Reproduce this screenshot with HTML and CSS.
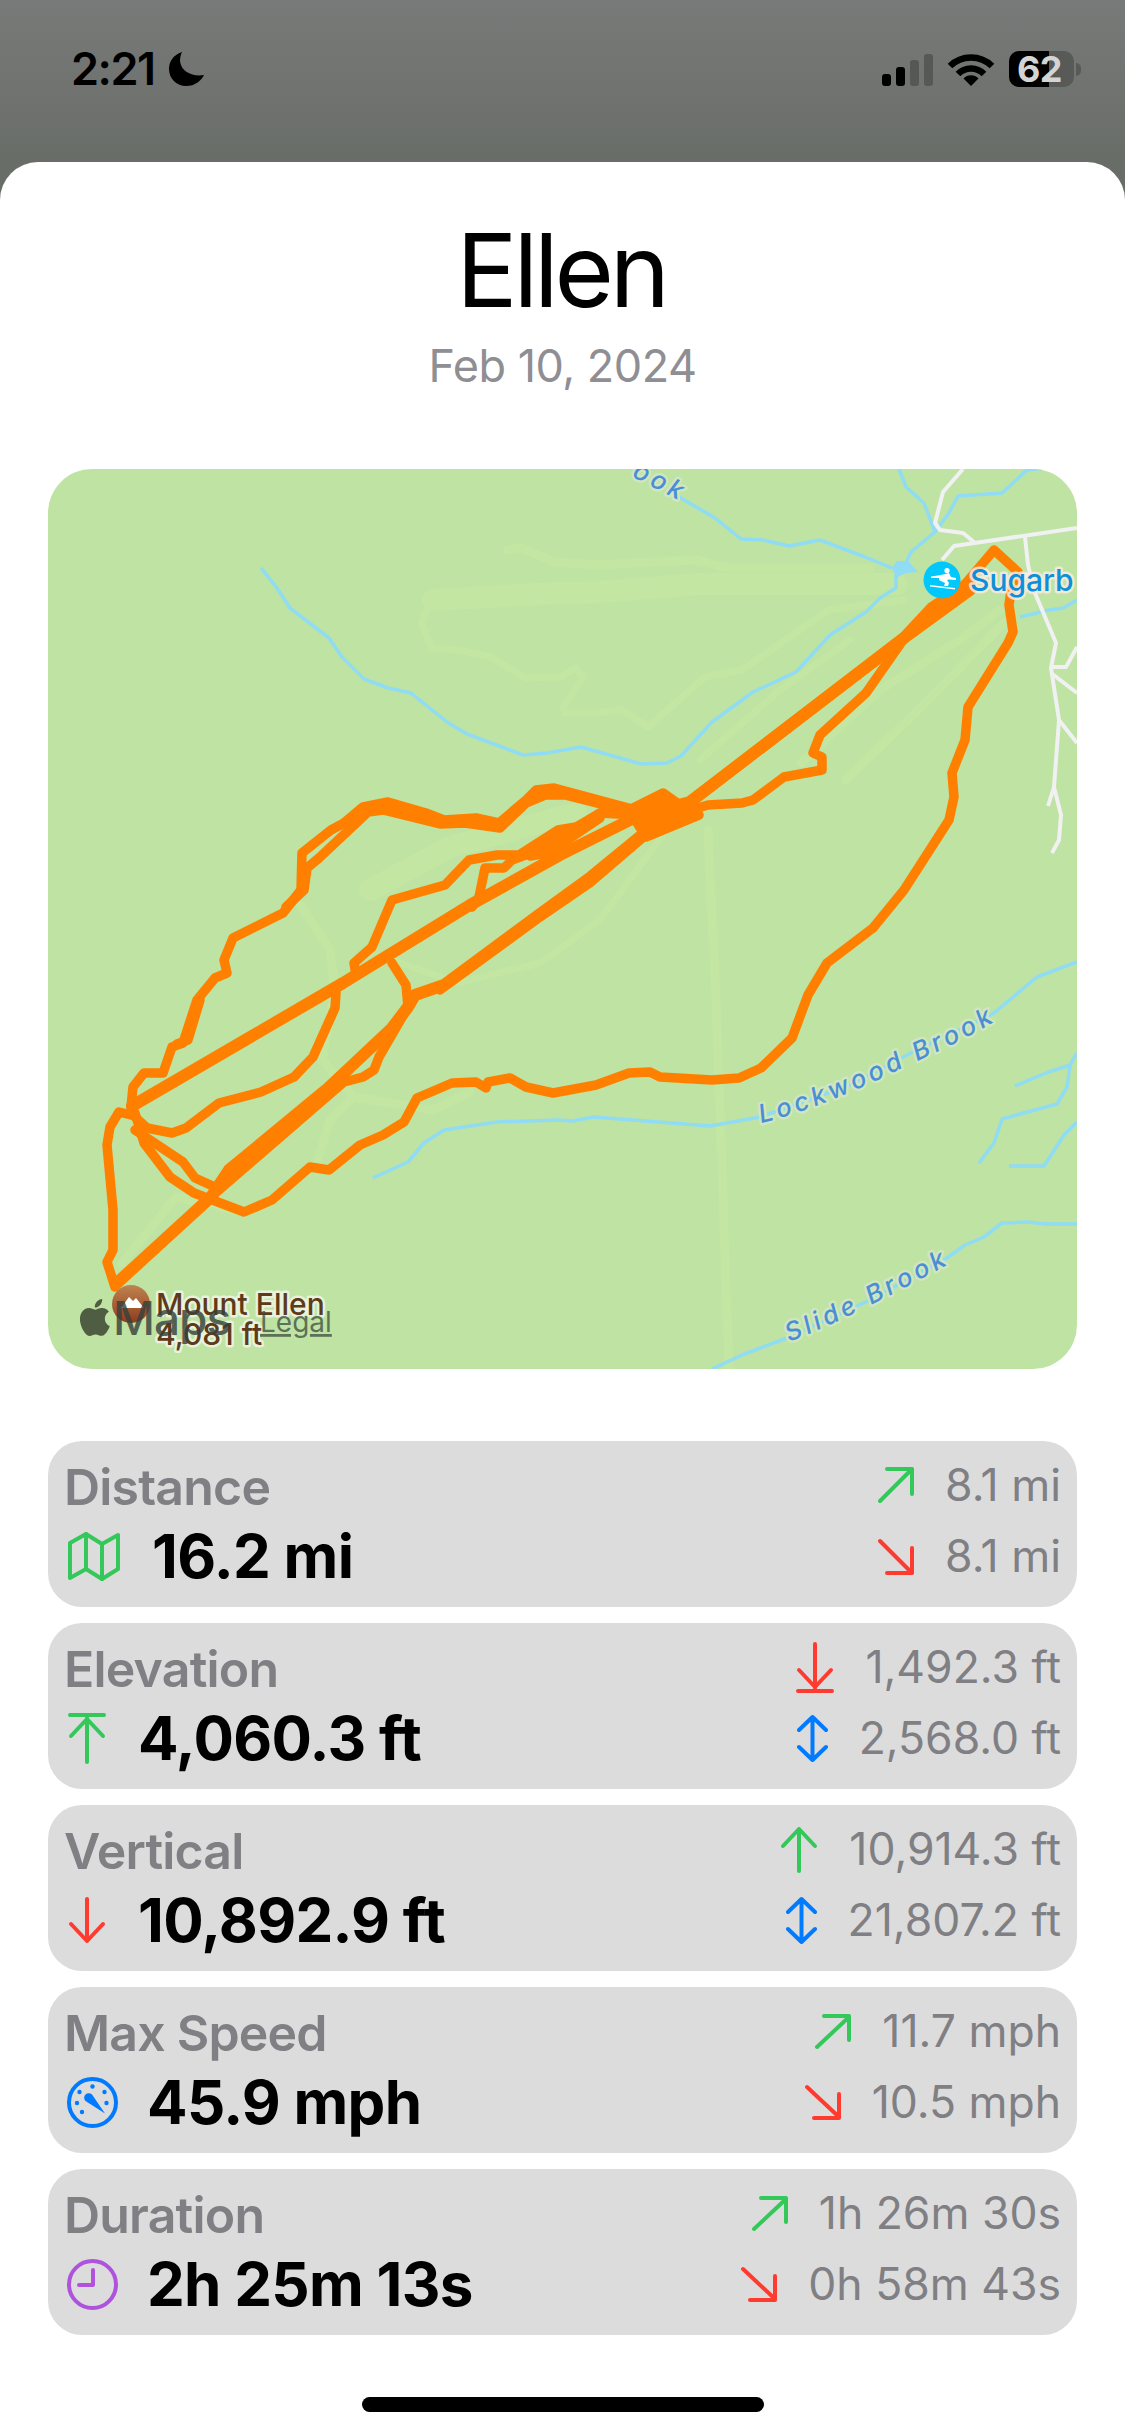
FILE: index.html
```html
<!DOCTYPE html>
<html lang="en">
<head>
<meta charset="utf-8">
<title>Ellen</title>
<link rel="stylesheet" href="styles.css">
</head>
<body>
<header class="status">
  <div class="status-left">
    <span class="clock">2:21</span>
    <svg class="moon" viewBox="0 0 35 34"><path d="M13 0C4 3 0 10 0 17c0 10 8 17 17 17 9 0 15-5 18-11-11 2-23-3-24-14 0-4 1-7 2-9z"/></svg>
  </div>
  <div class="status-right">
    <div class="signal"><i class="bar b1"></i><i class="bar b2"></i><i class="bar b3"></i><i class="bar b4"></i></div>
    <svg class="wifi" viewBox="0 0 48 32"><path class="wifi-arc" d="M3 12A30 30 0 0 1 45 12"/><path class="wifi-arc" d="M11 20A18 18 0 0 1 37 20"/><path d="M24 32 16.500 24.500A10.500 10.500 0 0 1 31.500 24.500Z"/></svg>
    <div class="battery"><div class="battery-fill"></div><span class="battery-text">62</span></div>
    <div class="battery-nub"></div>
  </div>
</header>

<main class="sheet">
  <h1 class="title">Ellen</h1>
  <p class="date">Feb 10, 2024</p>

  <div class="map">
    <svg class="map-canvas" viewBox="48 469 1029 900">
      <defs>
        <path id="lockwood" d="M761 1123 C800 1114 850 1094 890 1074 S960 1044 1010 1012"/>
        <path id="slide" d="M789 1342 C830 1326 880 1302 960 1258"/>
        <path id="topbrook" d="M560 440 L682 502"/>
        <linearGradient id="peak" x1="0" y1="0" x2="0" y2="1"><stop offset="0" stop-color="#c08350"/><stop offset="1" stop-color="#8e3c1c"/></linearGradient>
      </defs>

      <g class="piste">
        <path class="wide" d="M433 600 540 594 600 592 698 584 897 584"/>
        <path class="mid" d="M508 550 522 548 554 562 600 565 629 563 698 560 725 568 870 568"/>
        <path class="thin" d="M433 593 422 623 431 648 460 650 490 657 526 678 561 677 576 668 583 677 563 708 565 713 594 713 622 710 648 727 705 677 742 670 829 610 904 600"/>
        <path class="mid" d="M846 780 921 707 1004 623"/>
        <path class="mid" d="M801 763 880 690 960 640 1000 610"/>
        <path class="thin" d="M700 760 780 690 850 640"/>
        <path class="mid" d="M708 830 716 1000 729 1369"/>
        <path class="wide" d="M370 890 450 847 576 813"/>
        <path class="mid" d="M122 1263 176 1197 244 1212"/>
        <path class="mid" d="M300 905 330 950 335 990 322 1060 354 1097 330 1120 316 1165"/>
        <path class="mid" d="M354 1097 433 1110 470 1092"/>
        <path class="thin" d="M392 960 458 983 540 963 600 920 663 835"/>
      </g>

      <g class="stream">
        <path d="M261 568 277 588 290 608 329 638 342 657 364 679 388 688 411 693 447 722 467 734 523 755 547 753 581 747 641 764 667 763 681 756 712 722 753 692 796 672 830 635 866 612 880 598 896 588 896 575"/>
        <path d="M679 497 715 518 741 539 763 540 789 546 820 540 865 557 892 568"/>
        <path d="M905 565 911 552 935 532 949 513 958 496 1002 493 1027 470 1045 468"/>
        <path d="M899 469 906 487 924 503 935 532"/>
        <path d="M1020 617 1049 610 1063 608 1077 600"/>
        <path d="M373 1178 408 1162 424 1143 444 1130 497 1122 558 1120 572 1121 594 1117 710 1126 760 1117 850 1085 911 1053 994 1013 1037 977 1077 962"/>
        <path d="M1015 1086 1046 1073 1070 1065 1077 1053"/>
        <path d="M1070 1065 1067 1087 1057 1104 1002 1119 994 1143 979 1163"/>
        <path d="M1009 1166 1044 1166 1064 1135 1077 1122"/>
        <path d="M712 1369 742 1355 787 1338 870 1300 947 1258 965 1245 984 1237 1002 1223 1028 1222 1046 1224 1077 1224"/>
      </g>
      <path class="lake" d="M892 568 897 561 908 561 918 572 906 573 896 578Z"/>

      <g class="road">
        <path d="M963 469 943 492 935 523 940 530 963 533 974 542"/>
        <path d="M1077 528 954 546 942 560"/>
        <path d="M1025 537 1028 565 1035 593 1056 643 1051 668 1059 720 1054 787 1061 815 1059 840 1052 853"/>
        <path d="M1054 787 1048 806"/>
        <path d="M1059 720 1077 743"/>
        <path d="M1051 673 1077 693"/>
        <path d="M1051 667 1066 667 1077 647"/>
        <path d="M1028 573 1018 585"/>
      </g>

      <g class="track">
        <path class="thick" d="M132 1106 343 983 470 905 560 855 640 815 690 802 904 638 932 608 970 583"/>
        <path class="thick" d="M117 1283 211 1197 229 1170 326 1090 392 1028 408 1007 415 995 444 985 540 914 591 877 646 832 690 802 904 638 970 590"/>
        <path d="M232 1172 326 1094"/>
        <path d="M440 990 540 917 591 882 646 835"/>
        <path d="M131 1107 133 1087 144 1073 163 1073 172 1047 183 1043 197 1000 215 978 227 973 224 960 233 938 283 913 301 890 302 853 331 830 344 823 363 807 388 802 426 813 444 820 476 818 499 823 526 800 536 790 554 788 569 792 636 810"/>
        <path d="M177 1044 188 1040 200 1000"/>
        <path d="M286 907 304 890 307 868 319 858 368 812 383 810 440 824 465 823 500 828 526 803 545 795 565 795 636 813"/>
        <path d="M356 975 354 963 372 947 392 900 445 885 469 860 497 855 519 855 558 830 576 827 600 813 636 815 663 817"/>
        <path d="M472 907 479 897 485 868 504 868 512 860 547 847 600 813"/>
        <path d="M530 856 548 853 600 818"/>
        <path d="M392 963 406 985 408 1007 379 1057 374 1070 363 1077 344 1082 211 1197"/>
        <path d="M336 993 335 1008 313 1057 294 1077 261 1092 219 1103 186 1128 172 1133 147 1128 135 1117"/>
        <path d="M135 1113 144 1143 170 1177 194 1193 244 1212 272 1200 310 1167 329 1170 360 1145 383 1135 404 1122 417 1098 452 1083 476 1082 486 1088 488 1082 510 1078 526 1087 553 1093 596 1085 629 1073 650 1072 660 1077 712 1080 739 1078 761 1068 792 1038 808 995 827 963 873 928 904 890 949 820 954 797 952 773 965 740 968 707 1008 643 1013 632 1009 605 1011 590 1018 572 994 550 966 583 939 607"/>
        <path d="M135 1130 183 1162 195 1178 215 1187"/>
        <path d="M131 1115 119 1112 110 1127 107 1145 113 1210 113 1250 107 1262 115 1287"/>
        <path d="M680 813 708 805 742 803 753 800 784 777 822 770 822 757 813 753 820 735 866 693 901 643"/>
        <path class="blob" d="M629 810 663 793 680 805 699 815 646 837Z"/>
      </g>

      <text class="water"><textPath href="#lockwood">Lockwood Brook</textPath></text>
      <text class="water"><textPath href="#slide">Slide Brook</textPath></text>
      <text class="water" text-anchor="end"><textPath href="#topbrook" startOffset="100%">ook</textPath></text>

      <circle class="ski-badge" cx="942" cy="580" r="18.500"/>
      <g class="skier">
        <circle cx="947" cy="570.500" r="2.600"/>
        <path d="M941 575 949 573 951 577 956 578 956 580 949 579.500 947 580 949 583 948 586 944 586 945 583 939 580 939 578 931 578 931 576.500Z"/>
        <path d="M930 585 955 588V589.500L930 586.500Z"/>
      </g>
      <text class="poi" x="970" y="591">Sugarb</text>

      <circle class="peak-badge" cx="131" cy="1304" r="19"/>
      <path class="peak-snow" d="M121 1308 129 1297 133 1301 136 1298 144 1308Z"/>
      <text class="peak-name" x="156" y="1315">Mount Ellen</text>
      <text class="peak-name" x="156" y="1345">4,081 ft</text>

      <svg class="apple" x="80" y="1299" width="30" height="37" viewBox="3.900 2 16.300 20"><path d="M18.710 19.500c-.83 1.240-1.710 2.450-3.050 2.470-1.340.03-1.770-.79-3.290-.79-1.530 0-2 .77-3.270.82-1.310.05-2.300-1.320-3.140-2.530C4.250 17 2.940 12.450 4.700 9.390c.87-1.520 2.430-2.480 4.120-2.510 1.280-.02 2.500.87 3.290.87.78 0 2.260-1.070 3.810-.91.65.03 2.470.26 3.640 1.980-.09.06-2.170 1.280-2.150 3.810.03 3.020 2.650 4.030 2.680 4.040-.03.07-.42 1.440-1.380 2.830M13 3.500c.73-.83 1.940-1.460 2.940-1.500.13 1.170-.34 2.350-1.040 3.190-.69.85-1.830 1.510-2.950 1.420-.15-1.150.41-2.350 1.050-3.110z"/></svg>
      <text class="maps-word" x="113" y="1335">Maps</text>
      <text class="legal" x="260" y="1332">Legal</text>
    </svg>
  </div>

  <section class="stats">
    <article class="card">
      <div class="main">
        <div class="label">Distance</div>
        <div class="value-row">
          <svg class="ico ico-map green" viewBox="0 0 52 49"><path d="M2 11 18 2 34 12 50 3V37L34 47 18 37 2 46Z"/><path d="M18 2V37M34 12V47"/></svg>
          <span class="value">16.2 mi</span>
        </div>
      </div>
      <div class="side">
        <div class="side-row"><svg class="ico ico-diag green" viewBox="0 0 36 37"><path d="M2 34 34 2M9 2H34V27"/></svg><span>8.1 mi</span></div>
        <div class="side-row"><svg class="ico ico-diag red" viewBox="0 0 36 37"><path d="M2 3 34 35M9 35H34V10"/></svg><span>8.1 mi</span></div>
      </div>
    </article>

    <article class="card">
      <div class="main">
        <div class="label">Elevation</div>
        <div class="value-row">
          <svg class="ico ico-bar green" viewBox="0 0 38 51"><path d="M2 2H36M19 49V5M3 23 19 6 35 23"/></svg>
          <span class="value">4,060.3 ft</span>
        </div>
      </div>
      <div class="side">
        <div class="side-row"><svg class="ico ico-bar red" viewBox="0 0 38 51"><path d="M2 49H36M19 2V46M3 28 19 45 35 28"/></svg><span>1,492.3 ft</span></div>
        <div class="side-row"><svg class="ico ico-both blue" viewBox="0 0 31 49"><path d="M15.500 3V46M2 16 15.500 3 29 16M2 33 15.500 46 29 33"/></svg><span>2,568.0 ft</span></div>
      </div>
    </article>

    <article class="card">
      <div class="main">
        <div class="label">Vertical</div>
        <div class="value-row">
          <svg class="ico ico-line red" viewBox="0 0 38 47"><path d="M19 2V44M3 27 19 44 35 27"/></svg>
          <span class="value">10,892.9 ft</span>
        </div>
      </div>
      <div class="side">
        <div class="side-row"><svg class="ico ico-line green" viewBox="0 0 38 47"><path d="M19 45V3M3 20 19 3 35 20"/></svg><span>10,914.3 ft</span></div>
        <div class="side-row"><svg class="ico ico-both blue" viewBox="0 0 31 49"><path d="M15.500 3V46M2 16 15.500 3 29 16M2 33 15.500 46 29 33"/></svg><span>21,807.2 ft</span></div>
      </div>
    </article>

    <article class="card">
      <div class="main">
        <div class="label">Max Speed</div>
        <div class="value-row">
          <svg class="ico ico-dial blue" viewBox="0 0 51 51"><circle cx="25.500" cy="25.500" r="23.500"/><path class="needle" d="M18.500 24A4.500 4.500 0 0 1 25 17.500L38 36.500Z"/><g class="dots"><circle cx="25.500" cy="9.500" r="2.200"/><circle cx="12.500" cy="15" r="2.200"/><circle cx="37.500" cy="15" r="2.200"/><circle cx="10" cy="26" r="2.200"/><circle cx="39.500" cy="26" r="2.200"/><circle cx="15" cy="35" r="2.200"/></g></svg>
          <span class="value">45.9 mph</span>
        </div>
      </div>
      <div class="side">
        <div class="side-row"><svg class="ico ico-diag green" viewBox="0 0 36 37"><path d="M2 34 34 4M9 3H34V27"/></svg><span>11.7 mph</span></div>
        <div class="side-row"><svg class="ico ico-diag red" viewBox="0 0 36 37"><path d="M2 3 34 33M9 34H34V10"/></svg><span>10.5 mph</span></div>
      </div>
    </article>

    <article class="card">
      <div class="main">
        <div class="label">Duration</div>
        <div class="value-row">
          <svg class="ico ico-dial purple" viewBox="0 0 51 51"><circle cx="25.500" cy="25.500" r="23.500"/><path d="M26 11V26H12"/></svg>
          <span class="value">2h 25m 13s</span>
        </div>
      </div>
      <div class="side">
        <div class="side-row"><svg class="ico ico-diag green" viewBox="0 0 36 37"><path d="M2 34 34 4M9 3H34V27"/></svg><span>1h 26m 30s</span></div>
        <div class="side-row"><svg class="ico ico-diag red" viewBox="0 0 36 37"><path d="M2 3 34 33M9 34H34V10"/></svg><span>0h 58m 43s</span></div>
      </div>
    </article>
  </section>

  <div class="home-indicator"></div>
</main>
</body>
</html>
```
FILE: styles.css
```css
* { box-sizing: border-box; }
html, body { margin: 0; padding: 0; }
body {
  width: 1125px;
  height: 2436px;
  overflow: hidden;
  background: linear-gradient(#787a79, #696d68 162px);
  font-family: Inter, "Liberation Sans", sans-serif;
  color: #000;
}

/* status bar */
.status {
  height: 162px;
  display: flex;
  justify-content: space-between;
  align-items: flex-start;
  padding: 51px 44px 0 71px;
}
.status-left { display: flex; align-items: center; gap: 15px; }
.clock { font-size: 45px; font-weight: 600; line-height: 36px; letter-spacing: -1.500px; }
.moon { width: 35px; height: 34px; fill: #000; }
.status-right { display: flex; align-items: center; }
.signal { display: flex; align-items: flex-end; gap: 5px; height: 32px; margin-top: 2px; }
.bar { display: block; width: 9px; border-radius: 3px; background: #000; }
.b1 { height: 12px; }
.b2 { height: 19px; }
.b3 { height: 26px; background: #565856; }
.b4 { height: 32px; background: #565856; }
.wifi { width: 48px; height: 32px; margin-left: 14px; margin-top: 2px; fill: #000; }
.wifi-arc { fill: none; stroke: #000; stroke-width: 6.500px; }
.battery {
  position: relative;
  width: 65px;
  height: 36px;
  margin-left: 14px;
  border-radius: 10px;
  background: #585a58;
  display: flex;
  align-items: center;
  justify-content: center;
}
.battery-fill { position: absolute; left: 0; top: 0; bottom: 0; width: 40px; border-radius: 10px 0 0 10px; background: #000; }
.battery-text { position: relative; right: 2px; font-size: 36px; font-weight: 700; color: #d4d4d4; letter-spacing: -0.500px; line-height: 36px; }
.battery-nub { width: 5px; height: 13px; margin-left: 2px; border-radius: 0 5px 5px 0; background: #585a58; }

/* sheet */
.sheet {
  height: 2274px;
  background: #fff;
  border-radius: 38px 38px 0 0;
  padding: 46px 48px 0;
}
.title {
  margin: 0;
  padding-right: 3px;
  text-align: center;
  font-size: 102px;
  font-weight: 400;
  line-height: 124px;
  letter-spacing: -4.200px;
}
.date {
  margin: 7px 0 0;
  text-align: center;
  font-size: 45px;
  line-height: 54px;
  letter-spacing: -0.500px;
  color: #8e8e93;
}

/* map */
.map {
  margin-top: 76px;
  height: 900px;
  border-radius: 44px;
  overflow: hidden;
  background: #bee3a2;
}
.map-canvas { display: block; width: 1029px; height: 900px; }
.piste path { fill: none; stroke: #c4e6a3; stroke-linejoin: round; stroke-linecap: round; }
.piste .wide { stroke-width: 22px; }
.piste .mid { stroke-width: 9px; }
.piste .thin { stroke-width: 7px; }
.stream path { fill: none; stroke: #8fdcf4; stroke-width: 3.500px; stroke-linejoin: round; }
.lake { fill: #8fdcf4; }
.road path { fill: none; stroke: #f1f0f2; stroke-width: 4px; stroke-linejoin: round; }
.track path { fill: none; stroke: #ff8000; stroke-width: 9.500px; stroke-linejoin: round; stroke-linecap: round; }
.track .thick { stroke-width: 12px; }
.track .blob { fill: #ff8000; }
.water {
  font-size: 25.500px;
  font-style: italic;
  font-weight: 500;
  letter-spacing: 3.900px;
  fill: #4a8fd6;
  stroke: #d0e6c0;
  stroke-width: 5px;
  stroke-linejoin: round;
  paint-order: stroke;
}
.ski-badge { fill: #00c7fc; }
.skier { fill: #fff; }
.poi {
  font-size: 30px;
  font-weight: 500;
  fill: #0d8fdb;
  stroke: rgba(250, 235, 225, 0.85);
  stroke-width: 5px;
  stroke-linejoin: round;
  paint-order: stroke;
}
.peak-badge { fill: url(#peak); }
.peak-snow { fill: #fff; }
.peak-name {
  font-size: 30px;
  font-weight: 500;
  fill: #5c3a1a;
  stroke: rgba(240, 245, 230, 0.85);
  stroke-width: 5px;
  stroke-linejoin: round;
  paint-order: stroke;
}
.apple { fill: #4f5e42; }
.maps-word { font-size: 46px; font-weight: 500; fill: rgba(55, 65, 60, 0.82); letter-spacing: -1px; }
.legal {
  font-size: 28px;
  fill: rgba(60, 75, 60, 0.75);
  text-decoration: underline;
  text-decoration-thickness: 3px;
  text-underline-offset: 4px;
}

/* cards */
.stats { margin-top: 72px; display: flex; flex-direction: column; gap: 16px; }
.card {
  height: 166px;
  padding: 0 16px;
  border-radius: 34px;
  background: #dcdcdd;
  display: flex;
  justify-content: space-between;
}
.main { padding-top: 16px; }
.label { font-size: 50px; font-weight: 600; line-height: 60px; color: #7f7f84; letter-spacing: -0.800px; }
.value-row { margin-top: 3px; height: 73px; padding-left: 4px; display: flex; align-items: center; gap: 32px; }
.value { font-size: 60px; font-weight: 700; line-height: 73px; letter-spacing: -0.700px; white-space: nowrap; }
.side { padding-top: 9px; display: flex; flex-direction: column; align-items: flex-end; }
.side-row { height: 71px; display: flex; align-items: center; gap: 31px; font-size: 44.500px; line-height: 71px; color: #7f7f84; white-space: nowrap; }

/* icons */
.ico { flex: none; fill: none; stroke-width: 4px; stroke-linecap: round; stroke-linejoin: round; }
.green { stroke: #34c759; }
.red { stroke: #ff3b30; }
.blue { stroke: #007aff; }
.purple { stroke: #af52de; }
.ico-map { width: 52px; height: 49px; }
.ico-diag { width: 36px; height: 37px; }
.ico-bar { width: 38px; height: 51px; }
.ico-line { width: 38px; height: 47px; }
.ico-both { width: 31px; height: 49px; }
.ico-dial { width: 51px; height: 51px; margin: 0 -3px 0 -1px; }
.needle { fill: #007aff; stroke: none; }
.dots circle { fill: #007aff; stroke: none; }

.home-indicator {
  width: 402px;
  height: 15px;
  margin: 62px auto 0;
  border-radius: 8px;
  background: #000;
}
```
